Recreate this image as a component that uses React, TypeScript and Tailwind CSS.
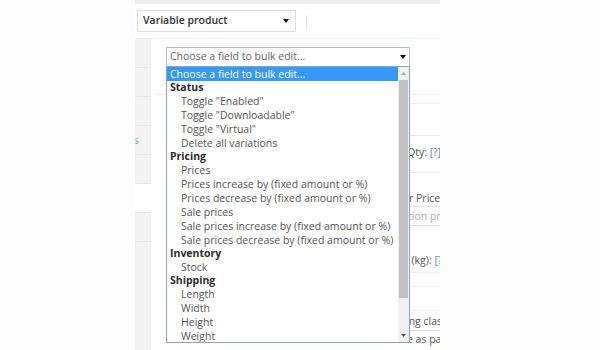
import React from "react";

type Item = { label: string; kind: "group" | "option" };

const ITEMS: Item[] = [
  { label: "Status", kind: "group" },
  { label: 'Toggle "Enabled"', kind: "option" },
  { label: 'Toggle "Downloadable"', kind: "option" },
  { label: 'Toggle "Virtual"', kind: "option" },
  { label: "Delete all variations", kind: "option" },
  { label: "Pricing", kind: "group" },
  { label: "Prices", kind: "option" },
  { label: "Prices increase by (fixed amount or %)", kind: "option" },
  { label: "Prices decrease by (fixed amount or %)", kind: "option" },
  { label: "Sale prices", kind: "option" },
  { label: "Sale prices increase by (fixed amount or %)", kind: "option" },
  { label: "Sale prices decrease by (fixed amount or %)", kind: "option" },
  { label: "Inventory", kind: "group" },
  { label: "Stock", kind: "option" },
  { label: "Shipping", kind: "group" },
  { label: "Length", kind: "option" },
  { label: "Width", kind: "option" },
  { label: "Height", kind: "option" },
  { label: "Weight", kind: "option" },
];

function Caret({ className = "" }: { className?: string }) {
  return (
    <svg width="6" height="4" viewBox="0 0 6 4" className={className}>
      <path d="M0 0h6L3 4z" fill="#111" />
    </svg>
  );
}

function Tabs() {
  // product data tabs, only a sliver shows
  const tabs = ["", "", "", "s", "", "active", ""];
  return (
    <div className="w-[16px] bg-[#f3f3f3] flex flex-col overflow-hidden">
      {tabs.map((t, i) => (
        <div
          key={i}
          className={`h-[29px] border-b border-[#e6e6e6] flex items-center text-[10px] text-[#8fb1cc] ${
            t === "active" ? "bg-white" : ""
          }`}
        >
          {t === "s" ? <span className="-ml-[1px]">s</span> : null}
        </div>
      ))}
    </div>
  );
}

function SideFields() {
  // right edge of the variation form, mostly covered by the open list
  return (
    <div className="ml-[258px] w-[31px] overflow-hidden whitespace-nowrap text-[10.5px] leading-[12px] text-[#555]">
      <div className="h-[9px] border-b border-[#eeeeee]" />
      <div className="h-[32px] border-b border-[#e8e8e8]" />
      <div className="h-[37px] pt-[10px] border-b border-[#eeeeee]">
        <span className="-ml-[2px]">
          Qty: <span className="text-[#4f8ac9]">[?]</span>
        </span>
      </div>
      <div className="h-[33px] pt-[19px]">r Price:</div>
      <div className="h-[20px] border-y border-[#e2e2e2] flex items-center text-[#b0b0b0]">
        <span className="-ml-[1px]">tion price</span>
      </div>
      <div className="h-[47px] pt-[28px] border-b border-[#eeeeee]">
        <span className="-ml-[4px]">
          t (kg): <span className="text-[#4f8ac9]">[?]</span>
        </span>
      </div>
      <div className="h-[14px] border-b border-[#eeeeee]" />
      <div className="h-[24px] border-b border-[#eeeeee]" />
      <div className="h-[19px] pt-[4px]">
        <span className="-ml-[3px]">ing class</span>
      </div>
      <div className="h-[19px] border-t border-[#e2e2e2] pt-[2px]">
        <span className="-ml-[2px]">e as parent</span>
      </div>
    </div>
  );
}

function OpenList() {
  return (
    <div className="absolute left-[166px] top-[66px] w-[244px] h-[277px] border border-[#8aa4c2] bg-white flex text-[10.5px]">
      <div className="w-[231px] overflow-hidden">
        <div className="h-[14px] bg-[#3399ff] text-white pl-[3px] leading-[14px] whitespace-nowrap">
          Choose a field to bulk edit...
        </div>
        {ITEMS.map((it) =>
          it.kind === "group" ? (
            <div
              key={it.label}
              className="h-[13px] leading-[13px] pl-[3px] font-bold text-[#2b2b2b] whitespace-nowrap"
            >
              {it.label}
            </div>
          ) : (
            <div
              key={it.label}
              className="h-[14px] leading-[14px] pl-[14px] text-[#555555] whitespace-nowrap"
            >
              {it.label}
            </div>
          )
        )}
      </div>
      <div className="w-[11px] bg-[#f1f1f1] flex flex-col items-center">
        <div className="h-[13px] flex items-center justify-center">
          <svg width="5" height="3" viewBox="0 0 5 3">
            <path d="M0 3h5L2.5 0z" fill="#a8a8a8" />
          </svg>
        </div>
        <div className="w-[9px] h-[218px] bg-[#c1c1c1]" />
        <div className="flex-1" />
        <div className="h-[13px] flex items-center justify-center">
          <svg width="5" height="3" viewBox="0 0 5 3">
            <path d="M0 0h5L2.5 3z" fill="#505050" />
          </svg>
        </div>
      </div>
    </div>
  );
}

export default function App() {
  return (
    <div className="relative w-[600px] h-[350px] overflow-hidden bg-[#fdfdfd] font-['Open_Sans',sans-serif]">
      <div className="ml-[135px] w-[305px] h-full bg-white flex flex-col">
        <div className="h-[4px] bg-[#ececec]" />
        <div className="h-[35px] flex items-start pt-[6px] pl-[2px] border-b border-[#eeeeee]">
          <div className="w-[159px] h-[22px] border border-[#dddddd] flex items-center justify-between pl-[5px] pr-[6px] text-[10.5px] font-semibold text-[#333]">
            Variable product
            <Caret />
          </div>
          <div className="ml-[10px] mt-[5px] w-px h-[15px] bg-[#e3e3e3]" />
        </div>
        <div className="flex flex-1">
          <Tabs />
          <div className="flex-1">
            <div className="ml-[5px] pl-[10px] pt-[8px] h-[56px] border-b border-[#eeeeee]">
              <div className="w-[244px] h-[20px] border border-[#9fbfdf] flex items-center justify-between pl-[3px] pr-[3px] text-[10.5px] text-[#666]">
                Choose a field to bulk edit...
                <Caret />
              </div>
            </div>
            <SideFields />
          </div>
        </div>
      </div>
      <OpenList />
    </div>
  );
}
